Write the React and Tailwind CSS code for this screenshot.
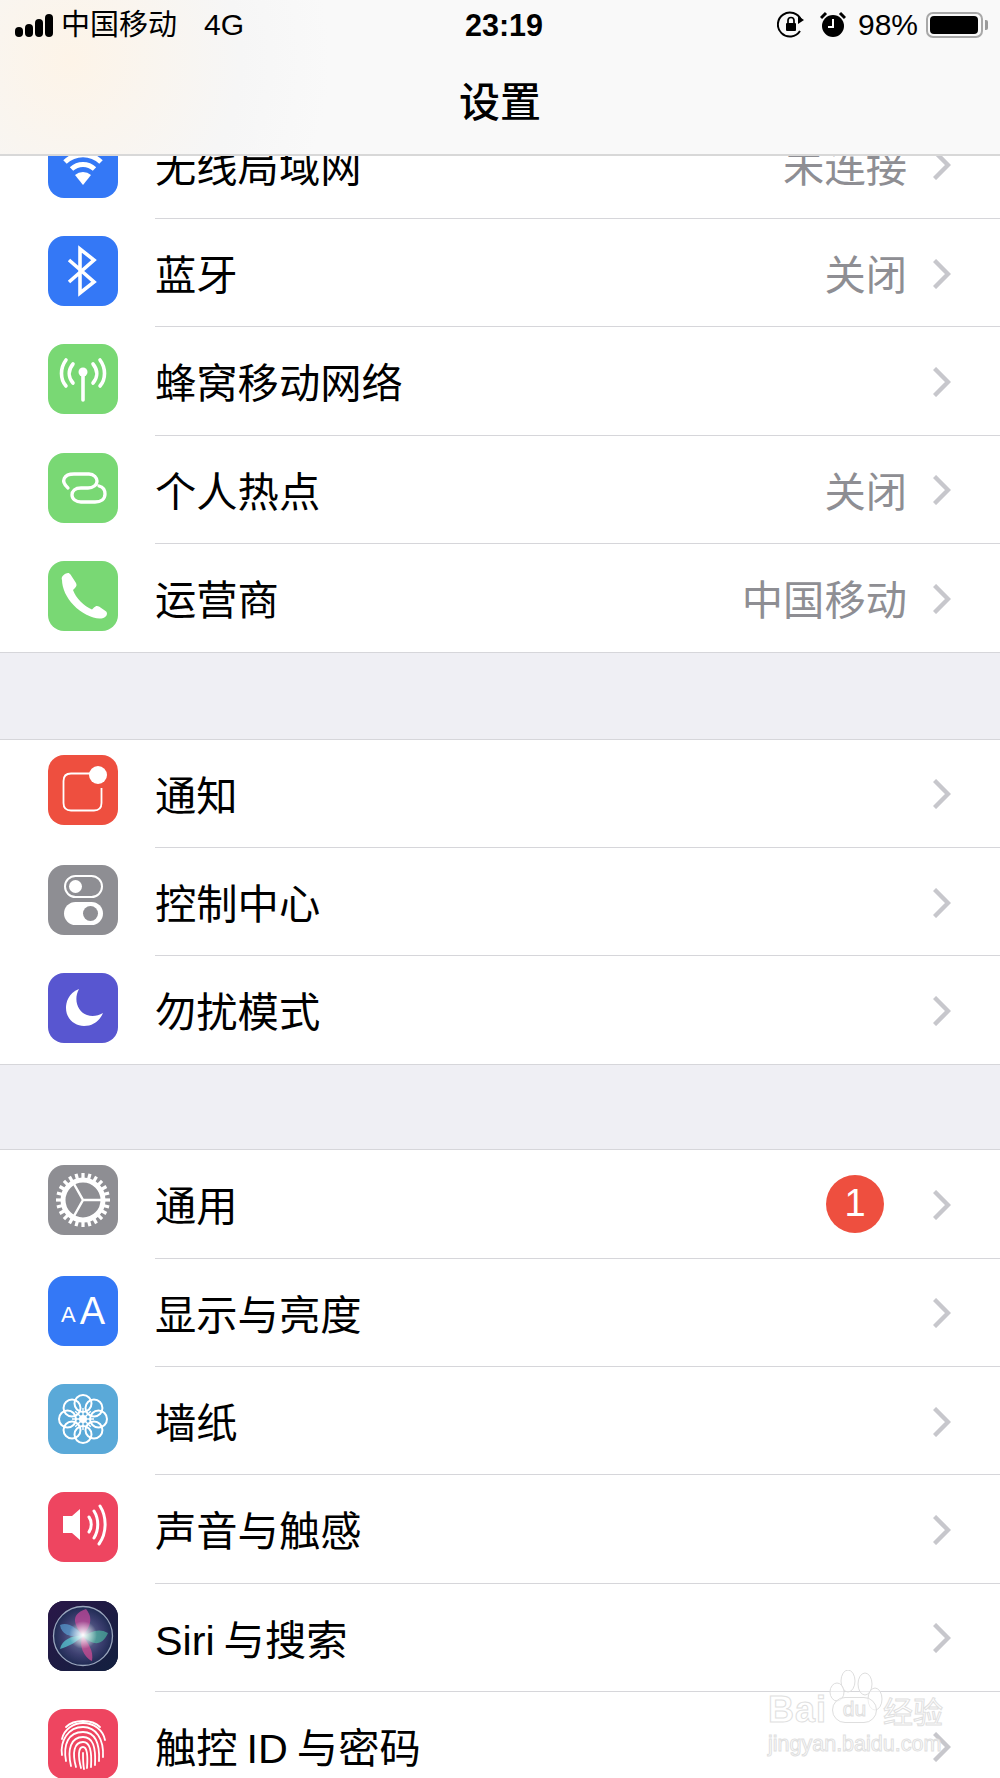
import React from "react";

const FONT = { fontFamily: '"Liberation Sans", "Noto Sans CJK SC", sans-serif' };

function Wifi() {
  return (
    <svg viewBox="0 0 70 70" className="w-full h-full" fill="none" stroke="#fff" strokeLinecap="butt">
      <path d="M17 34 A26 26 0 0 1 53 34" strokeWidth="5" />
      <path d="M23.5 41 A17 17 0 0 1 46.5 41" strokeWidth="5" />
      <path d="M35 57 L27 47 A12 12 0 0 1 43 47 Z" fill="#fff" stroke="none" />
    </svg>
  );
}

function Bluetooth() {
  return (
    <svg viewBox="0 0 70 70" className="w-full h-full" fill="none" stroke="#fff" strokeWidth="3.6">
      <path d="M21 24 L46 46 L32 57 L32 13 L46 24 L21 46" />
    </svg>
  );
}

function Antenna() {
  return (
    <svg viewBox="0 0 70 70" className="w-full h-full" fill="none" stroke="#fff" strokeWidth="3.6" strokeLinecap="round">
      <path d="M35 30 L35 56" />
      <circle cx="35" cy="28" r="4.5" fill="#fff" stroke="none" />
      <path d="M25 20 C20 26 20 33 25 39" />
      <path d="M45 20 C50 26 50 33 45 39" />
      <path d="M18 16 C12 24 12 35 18 42" />
      <path d="M52 16 C58 24 58 35 52 42" />
    </svg>
  );
}

function Hotspot() {
  return (
    <svg viewBox="0 0 70 70" className="w-full h-full" fill="none" stroke="#fff" strokeWidth="3.3" strokeLinecap="round">
      <path d="M20 35 C12 28 16 21 26 21 L41 21 C46 21 49 25 49 28 C49 32 45 35 40 35 L33 35 C27 35 24 38 24 42 C24 46 28 49 33 49 L47 49 C53 49 57 46 57 41 C57 37 55 34 51 33" />
    </svg>
  );
}

function Phone() {
  return (
    <svg viewBox="0 0 70 70" className="w-full h-full" fill="#fff">
      <path d="M14 19 C13 16 15 14 18 12.5 C20 11.5 21.5 12 22.5 13.5 L28 22 C29 24 28.5 25.5 27 27 L25 29 C26.5 33 29 37 32.5 40.5 C36 44 40 47 44 48.5 L46 46.5 C47.5 45 49 44.5 51 45.5 L57.5 50 C59 51 59.5 52.5 58.5 54.5 C57 57 54 57.5 51.5 57.5 C44 57.5 33 52 25.5 44 C18.5 37 14 27 14 19 Z" />
    </svg>
  );
}

function Notify() {
  return (
    <svg viewBox="0 0 70 70" className="w-full h-full" fill="none">
      <path d="M42 18.5 L23 18.5 C18 18.5 15.5 21 15.5 26 L15.5 48 C15.5 53 18 55.5 23 55.5 L46 55.5 C51 55.5 53.5 53 53.5 48 L53.5 33" stroke="#fff" strokeWidth="1.8" />
      <circle cx="50" cy="20" r="9" fill="#fff" />
    </svg>
  );
}

function Toggles() {
  return (
    <svg viewBox="0 0 70 70" className="w-full h-full">
      <rect x="17" y="11" width="37" height="21" rx="10.5" fill="none" stroke="#fff" strokeWidth="2" />
      <circle cx="27.5" cy="21.5" r="6.5" fill="#fff" />
      <rect x="16" y="37" width="39" height="23" rx="11.5" fill="#fff" />
      <circle cx="42.5" cy="48.5" r="7.5" fill="#8e8e93" />
    </svg>
  );
}

function Moon() {
  return (
    <svg viewBox="0 0 70 70" className="w-full h-full" fill="#fff">
      <path d="M31 16 C20 20 18 30 18 35 C18 46 27 53 36 53 C44 53 51 49 55 40 C50 43 44 44 39 42 C30 39 25 27 31 16 Z" />
    </svg>
  );
}

function Gear() {
  const teeth = Array.from({ length: 24 }, (_, i) => i * 15);
  return (
    <svg viewBox="0 0 70 70" className="w-full h-full" fill="none" stroke="#fff">
      {teeth.map((a) => (
        <rect key={a} x="33.4" y="8" width="3.2" height="7" fill="#fff" stroke="none" transform={`rotate(${a} 35 35)`} />
      ))}
      <circle cx="35" cy="35" r="20" strokeWidth="5" />
      <path d="M35 35 L26 19 M35 35 L53 35 M35 35 L26 51" strokeWidth="2.5" />
    </svg>
  );
}

function TextSize() {
  return (
    <div className="w-full h-full flex items-end justify-center gap-[4px] pb-[17px] text-white leading-none" style={FONT}>
      <span className="text-[22px] leading-[22px] font-medium mb-[3px]">A</span>
      <span className="text-[38px] leading-[36px]">A</span>
    </div>
  );
}

function Flower() {
  const petals = Array.from({ length: 8 }, (_, i) => i * 45);
  return (
    <svg viewBox="0 0 70 70" className="w-full h-full" fill="none" stroke="#fff" strokeWidth="2">
      {petals.map((a) => (
        <g key={a} transform={`rotate(${a} 35 35)`}>
          <circle cx="35" cy="19.5" r="8.5" />
          <path d="M35 35 L35 24" strokeWidth="1.4" />
        </g>
      ))}
      <circle cx="35" cy="35" r="4" fill="#fff" stroke="none" />
    </svg>
  );
}

function Speaker() {
  return (
    <svg viewBox="0 0 70 70" className="w-full h-full" fill="none" stroke="#fff" strokeWidth="3" strokeLinecap="round">
      <path d="M15 24 L24 24 L32 17 L32 48 L24 41 L15 41 Z" fill="#fff" stroke="none" />
      <path d="M41 25 C44 29 44 36 41 40" />
      <path d="M46 19 C51 27 51 38 46 46" />
      <path d="M52 14 C59 25 59 41 51 52" />
    </svg>
  );
}

function Siri() {
  return (
    <svg viewBox="0 0 70 70" className="w-full h-full">
      <defs>
        <linearGradient id="siriBg" x1="0" y1="0" x2="1" y2="1">
          <stop offset="0" stopColor="#2a1748" />
          <stop offset="1" stopColor="#12203f" />
        </linearGradient>
        <radialGradient id="siriOrb" cx="0.5" cy="0.5" r="0.55">
          <stop offset="0" stopColor="#7a86a8" />
          <stop offset="0.6" stopColor="#3c3f70" />
          <stop offset="1" stopColor="#16244a" />
        </radialGradient>
        <radialGradient id="siriStar" cx="0.5" cy="0.5" r="0.5">
          <stop offset="0" stopColor="#fff" />
          <stop offset="1" stopColor="#fff" stopOpacity="0" />
        </radialGradient>
      </defs>
      <rect width="70" height="70" fill="url(#siriBg)" />
      <circle cx="35" cy="35" r="29.5" fill="url(#siriOrb)" stroke="#9aa6bd" strokeWidth="1.3" />
      <path d="M38 8 C48 20 38 30 35 35 C28 26 20 14 38 8 Z" fill="#c2489a" opacity="0.75" />
      <path d="M60 32 C50 26 42 32 35 35 C44 44 54 46 60 32 Z" fill="#4fc6a6" opacity="0.6" />
      <path d="M12 24 C20 20 30 28 35 35 C26 36 14 36 12 24 Z" fill="#5ba4d8" opacity="0.65" />
      <path d="M44 60 C46 50 40 42 35 35 C30 44 36 56 44 60 Z" fill="#cf4c93" opacity="0.75" />
      <path d="M12 48 C20 46 30 40 35 35 C26 34 14 38 12 48 Z" fill="#58d0d8" opacity="0.7" />
      <circle cx="35" cy="34" r="14" fill="url(#siriStar)" />
    </svg>
  );
}

function Fingerprint() {
  return (
    <svg viewBox="0 0 70 70" className="w-full h-full" fill="none" stroke="#fff" strokeWidth="1.8" strokeLinecap="round">
      <path d="M18 18 C26 10 44 10 52 18" />
      <path d="M14 30 C16 20 26 14 35 14 C46 14 55 21 57 31" />
      <path d="M14 46 C12 32 20 18 35 18 C48 18 56 30 55 48" />
      <path d="M18 52 C15 36 20 23 35 23 C47 23 52 34 51 52" />
      <path d="M23 57 C19 40 23 28 35 28 C45 28 48 38 47 56" />
      <path d="M28 58 C24 44 26 33 35 33 C42 33 44 42 43 58" />
      <path d="M33 59 C30 48 30 38 35 38 C39 38 40 46 39 59" />
      <path d="M35 44 C35 50 35 55 36 60" />
    </svg>
  );
}

function Chevron() {
  return (
    <svg viewBox="0 0 18 30" className="w-[18px] h-[30px] shrink-0 mt-[2px]" fill="none" stroke="#c7c7cc" strokeWidth="4.4">
      <path d="M1.5 1.5 L15 15 L1.5 28.5" />
    </svg>
  );
}

function Row({ bg, icon, label, value, badge, last, first }) {
  return (
    <div className={`flex pl-[48px] ${last ? "h-[107.4px]" : "h-[108.4px]"}`}>
      <div className={`w-[70px] h-[70px] rounded-[16px] overflow-hidden shrink-0 ${first ? "mt-[15px]" : "mt-[17px]"} ${bg}`}>{icon}</div>
      <div className={`flex-1 flex items-center ml-[37px] pr-[49px] ${last ? "" : "border-b border-[#d6d6da]"}`}>
        <span className="flex-1 pt-[8px] text-[41.3px] leading-none text-black [word-spacing:-2.5px]">{label}</span>
        {value && <span className="pt-[8px] text-[41.3px] leading-none text-[#8e8e93] mr-[26px]">{value}</span>}
        {badge && (
          <span className="w-[58px] h-[58px] rounded-full bg-[#ee4f3f] text-white text-[38px] font-light flex items-center justify-center mr-[49px]">
            {badge}
          </span>
        )}
        <Chevron />
      </div>
    </div>
  );
}

function Group({ children }) {
  return <div className="bg-white border-y border-[#d6d6da]">{children}</div>;
}

function StatusBar() {
  return (
    <div className="flex items-center h-[50px] text-black text-[29px] leading-none whitespace-nowrap">
      <div className="flex items-end gap-[2px] ml-[15px] h-[23px]">
        <span className="w-[8px] h-[10px] bg-black rounded-full" />
        <span className="w-[8px] h-[13px] bg-black rounded-full" />
        <span className="w-[8px] h-[18px] bg-black rounded-full" />
        <span className="w-[8px] h-[23px] bg-black rounded-full" />
      </div>
      <span className="ml-[8px]">中国移动</span>
      <span className="ml-[27px] text-[30px]">4G</span>
      <span className="absolute left-[465px] text-[30.5px] font-semibold">23:19</span>
      <div className="ml-auto flex items-center mr-[12px]">
        <svg viewBox="0 0 28 28" className="w-[28px] h-[28px]" fill="none" stroke="#000" strokeWidth="2">
          <path d="M23 20 A12 12 0 1 1 24 9" />
          <path d="M27 9 L21 5 L21 13 Z" fill="#000" stroke="none" />
          <rect x="9" y="12" width="10" height="8" rx="1" fill="#000" stroke="none" />
          <path d="M11 12 V9.5 A3 3 0 0 1 17 9.5 V12" strokeWidth="1.7" />
        </svg>
        <svg viewBox="0 0 26 28" className="w-[26px] h-[28px] ml-[15px]">
          <circle cx="13" cy="15" r="11" fill="#000" />
          <path d="M13 8 V16 H8" fill="none" stroke="#fff" strokeWidth="2" />
          <path d="M1 7 L6 2 M25 7 L20 2" stroke="#000" strokeWidth="3" />
        </svg>
        <span className="ml-[12px] text-[30px]">98%</span>
        <div className="ml-[8px] w-[57px] h-[26px] rounded-[7px] border-2 border-[#a8a8a8] p-[2px]">
          <div className="w-[48px] h-full rounded-[4px] bg-black" />
        </div>
        <span className="ml-[2px] w-[3px] h-[10px] rounded-r-[2px] bg-[#9a9a9a]" />
      </div>
    </div>
  );
}

function Watermark() {
  const outline = "text-white/70 [-webkit-text-stroke:1px_#e0e0e0]";
  return (
    <div className="absolute left-[768px] top-[1670px] w-[180px] h-[90px] pointer-events-none" style={FONT}>
      <svg viewBox="0 0 60 50" className="absolute left-[60px] top-0 w-[60px] h-[50px]" fill="#fff" fillOpacity="0.5" stroke="#dedede" strokeWidth="1">
        <ellipse cx="20" cy="11" rx="7" ry="11" />
        <ellipse cx="37" cy="14" rx="7" ry="11" />
        <ellipse cx="9" cy="22" rx="7" ry="9" />
        <ellipse cx="47" cy="29" rx="7" ry="11" />
      </svg>
      <span className={`absolute left-0 top-[22px] text-[36px] leading-none font-bold tracking-[1px] ${outline}`}>Bai</span>
      <span className={`absolute left-[64px] top-[27px] w-[45px] h-[26px] rounded-full border border-[#dedede] bg-white/50 text-[21px] leading-[22px] text-center ${outline}`}>du</span>
      <span className={`absolute left-[115px] top-[25px] text-[30px] leading-none ${outline}`} style={{ fontFamily: '"Noto Sans CJK SC", sans-serif' }}>经验</span>
      <span className={`absolute left-0 top-[64px] text-[21.5px] leading-none whitespace-nowrap ${outline}`}>jingyan.baidu.com</span>
    </div>
  );
}

export default function App() {
  return (
    <div className="relative w-[1000px] h-[1778px] overflow-hidden bg-[#efeff4] flex flex-col" style={FONT}>
      <header className="relative h-[156px] shrink-0 z-10 border-b-2 border-[#d8d8d8] bg-[radial-gradient(circle_at_70px_60px,#fdf4e8_0%,#f6f6f6_170px,transparent_260px),radial-gradient(circle_at_60px_150px,#eaf0f6_0%,transparent_200px),linear-gradient(#f9f9f9,#f9f9f9)]">
        <StatusBar />
        <div className="flex justify-center mt-[28px] text-[41px] leading-[50px] font-medium text-black">设置</div>
      </header>

      <main className="flex-1 overflow-hidden">
        <div className="bg-white border-b border-[#d6d6da] mt-[-45.4px]">
          <Row bg="bg-[#3478f6]" icon={<Wifi />} label="无线局域网" value="未连接" />
          <Row bg="bg-[#3478f6]" icon={<Bluetooth />} label="蓝牙" value="关闭" />
          <Row bg="bg-[#79d874]" icon={<Antenna />} label="蜂窝移动网络" />
          <Row bg="bg-[#79d874]" icon={<Hotspot />} label="个人热点" value="关闭" />
          <Row bg="bg-[#79d874]" icon={<Phone />} label="运营商" value="中国移动" last />
        </div>
        <div className="h-[86px]" />
        <Group>
          <Row first bg="bg-[#ee4f3f]" icon={<Notify />} label="通知" />
          <Row bg="bg-[#8e8e93]" icon={<Toggles />} label="控制中心" />
          <Row bg="bg-[#5856d0]" icon={<Moon />} label="勿扰模式" last />
        </Group>
        <div className="h-[84.5px]" />
        <Group>
          <Row first bg="bg-[#8e8e93]" icon={<Gear />} label="通用" badge="1" />
          <Row bg="bg-[#3478f6]" icon={<TextSize />} label="显示与亮度" />
          <Row bg="bg-[#5aa9d8]" icon={<Flower />} label="墙纸" />
          <Row bg="bg-[#ee4560]" icon={<Speaker />} label="声音与触感" />
          <Row bg="bg-[#1a1a3a]" icon={<Siri />} label="Siri 与搜索" />
          <Row bg="bg-[#ee4560]" icon={<Fingerprint />} label="触控 ID 与密码" />
        </Group>
      </main>

      <Watermark />
    </div>
  );
}
